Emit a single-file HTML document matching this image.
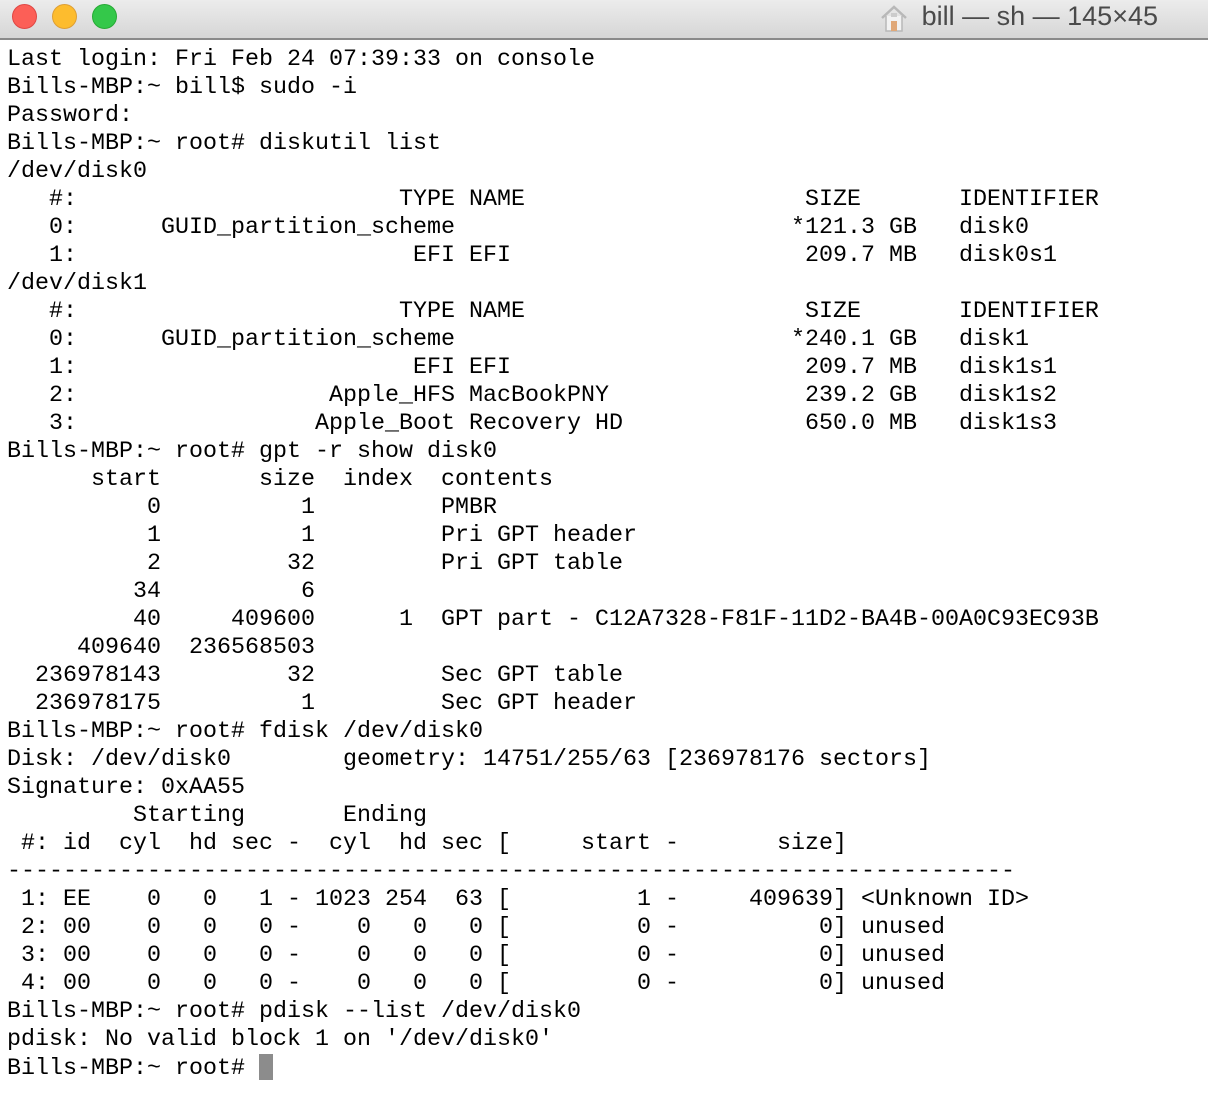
<!DOCTYPE html>
<html><head><meta charset="utf-8"><style>
html,body{margin:0;padding:0;background:#fff;width:1208px;height:1104px;overflow:hidden}
.bar{position:absolute;left:0;top:0;width:1208px;height:38px;background:linear-gradient(#ececec,#d6d6d6);border-bottom:2px solid #8a8a8a}
.dot{position:absolute;top:4px;width:24px;height:24px;border-radius:50%}
.title{position:absolute;right:50px;top:1px;font:27px "Liberation Sans",sans-serif;color:#4a4a4a;letter-spacing:0px}
pre{position:absolute;left:7px;top:46px;margin:0;font:23.33px/28px "Liberation Mono",monospace;color:#000}
.cur{display:inline-block;width:14px;height:26px;background:#8c8c8c;vertical-align:-6px}
</style></head><body>
<div class="bar">
<div class="dot" style="left:12px;background:#fc5f57;border:1px solid #df4744;width:23px;height:23px"></div>
<div class="dot" style="left:52px;background:#fdbc2e;border:1px solid #de9f34;width:23px;height:23px"></div>
<div class="dot" style="left:92px;background:#34c84a;border:1px solid #27aa35;width:23px;height:23px"></div>
<svg style="position:absolute;left:879px;top:4px" width="30" height="28" viewBox="0 0 30 28"><path d="M3 14 L15 3 L27 14" fill="none" stroke="#b8b8b8" stroke-width="2.5"/><path d="M7 12 V27 H23 V12" fill="#f2f2f2" stroke="#b8b8b8" stroke-width="1.5"/><rect x="12" y="17" width="6" height="10" fill="#e0a878"/><rect x="12" y="9" width="6" height="4" fill="#ccc"/></svg>
<div class="title">bill — sh — 145×45</div>
</div>
<pre>Last login: Fri Feb 24 07:39:33 on console
Bills-MBP:~ bill$ sudo -i
Password:
Bills-MBP:~ root# diskutil list
/dev/disk0
   #:                       TYPE NAME                    SIZE       IDENTIFIER
   0:      GUID_partition_scheme                        *121.3 GB   disk0
   1:                        EFI EFI                     209.7 MB   disk0s1
/dev/disk1
   #:                       TYPE NAME                    SIZE       IDENTIFIER
   0:      GUID_partition_scheme                        *240.1 GB   disk1
   1:                        EFI EFI                     209.7 MB   disk1s1
   2:                  Apple_HFS MacBookPNY              239.2 GB   disk1s2
   3:                 Apple_Boot Recovery HD             650.0 MB   disk1s3
Bills-MBP:~ root# gpt -r show disk0
      start       size  index  contents
          0          1         PMBR
          1          1         Pri GPT header
          2         32         Pri GPT table
         34          6
         40     409600      1  GPT part - C12A7328-F81F-11D2-BA4B-00A0C93EC93B
     409640  236568503
  236978143         32         Sec GPT table
  236978175          1         Sec GPT header
Bills-MBP:~ root# fdisk /dev/disk0
Disk: /dev/disk0        geometry: 14751/255/63 [236978176 sectors]
Signature: 0xAA55
         Starting       Ending
 #: id  cyl  hd sec -  cyl  hd sec [     start -       size]
------------------------------------------------------------------------
 1: EE    0   0   1 - 1023 254  63 [         1 -     409639] &lt;Unknown ID&gt;
 2: 00    0   0   0 -    0   0   0 [         0 -          0] unused
 3: 00    0   0   0 -    0   0   0 [         0 -          0] unused
 4: 00    0   0   0 -    0   0   0 [         0 -          0] unused
Bills-MBP:~ root# pdisk --list /dev/disk0
pdisk: No valid block 1 on '/dev/disk0'
Bills-MBP:~ root# <span class="cur"></span></pre>
</body></html>
